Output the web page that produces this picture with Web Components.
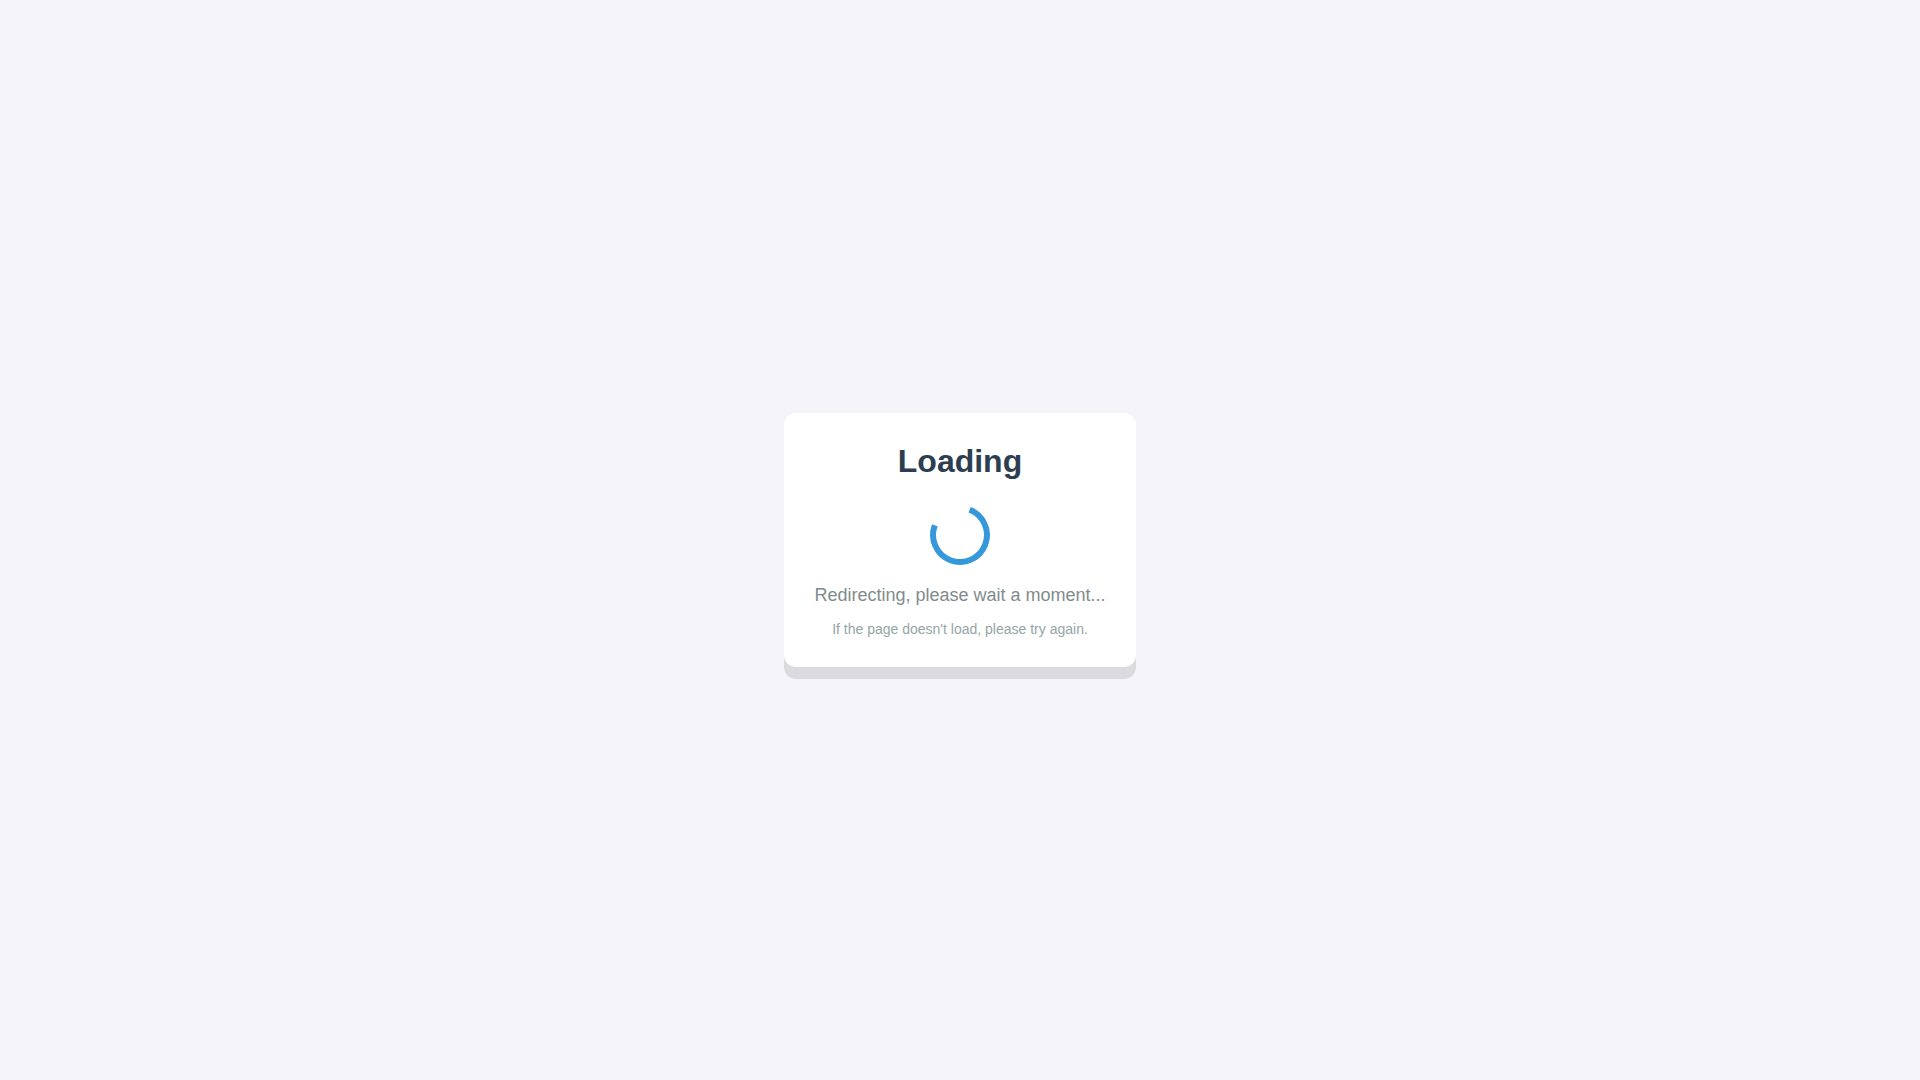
<!DOCTYPE html>
<html lang="en">
<head>
<meta charset="utf-8">
<meta name="viewport" content="width=device-width, initial-scale=1">
<title>Loading</title>
<style>
  body {
    margin: 0;
    min-height: 100vh;
    display: flex;
    justify-content: center;
    align-items: center;
    background: #f4f4f9;
    font-family: "Liberation Sans", Arial, sans-serif;
  }
</style>
</head>
<body>
<loading-card>
  <span slot="title">Loading</span>
  <loading-spinner></loading-spinner>
  <span slot="message">Redirecting, please wait a moment...</span>
  <span slot="hint">If the page doesn't load, please try again.</span>
</loading-card>
<script>
  class LoadingSpinner extends HTMLElement {
    constructor() {
      super();
      this.attachShadow({ mode: "open" }).innerHTML = `
        <style>
          :host { display: block; width: 60px; height: 60px; }
          .ring {
            box-sizing: border-box;
            width: 100%;
            height: 100%;
            border: 6px solid #3498db;
            border-top-color: transparent;
            border-radius: 50%;
            transform: rotate(-24deg);
          }
        </style>
        <div class="ring" role="status" aria-label="Loading"></div>`;
    }
  }

  class LoadingCard extends HTMLElement {
    constructor() {
      super();
      this.attachShadow({ mode: "open" }).innerHTML = `
        <style>
          :host {
            display: flex;
            flex-direction: column;
            align-items: center;
            padding: 30px;
            border-radius: 12px;
            background: #fff;
            box-shadow: 0 12px 0 rgba(0, 0, 0, 0.1);
            text-align: center;
          }
          h1, p { margin: 0; }
          h1 { font-size: 32px; line-height: 36px; color: #2c3e50; }
          .spinner { margin: 26px 0 20px; }
          .message { font-size: 18px; line-height: 20px; color: #7f8c8d; }
          .hint { margin-top: 16px; font-size: 14px; line-height: 16px; color: #95a5a6; }
        </style>
        <h1><slot name="title"></slot></h1>
        <div class="spinner"><slot></slot></div>
        <p class="message"><slot name="message"></slot></p>
        <p class="hint"><slot name="hint"></slot></p>`;
    }
  }

  customElements.define("loading-spinner", LoadingSpinner);
  customElements.define("loading-card", LoadingCard);
</script>
</body>
</html>
